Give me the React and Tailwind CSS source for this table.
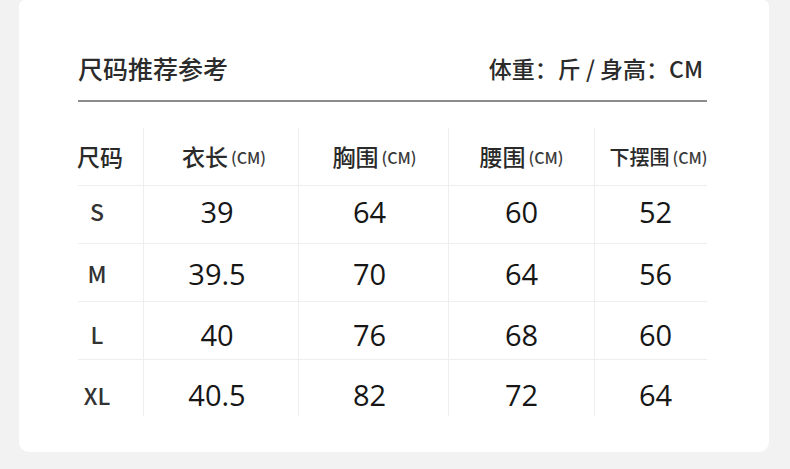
import React from "react";

const cols = "grid grid-cols-[65px_155px_150px_146px_112px]";

const headers = [
  { name: "衣长", pad: "pl-[6px]", size: "text-[23px]" },
  { name: "胸围", pad: "pl-[2px]", size: "text-[23px]" },
  { name: "腰围", pad: "", size: "text-[23px]" },
  { name: "下摆围", pad: "pl-[16px]", size: "text-[20px]" },
];

// shift: the text in the picture drifts lower row by row
const rows = [
  { size: "S", vals: ["39", "64", "60", "52"], shift: "-translate-y-[3px]" },
  { size: "M", vals: ["39.5", "70", "64", "56"], shift: "translate-y-[1px]" },
  { size: "L", vals: ["40", "76", "68", "60"], shift: "translate-y-[4px]" },
  { size: "XL", vals: ["40.5", "82", "72", "64"], shift: "translate-y-[7px]" },
];

// nudges so the numbers sit where they do in the picture
const valPad = ["pr-[8px]", "pr-[8px]", "", "pl-[10px]"];

const SizeTable = () => {
  return (
    <div className="mt-[26px]">
      {/* header row */}
      <div className={`${cols} h-[58px] border-b border-[#eeeeee]`}>
        <div className="flex items-center text-[23px] font-medium text-[#2a2a2a] -ml-[1px]">
          尺码
        </div>
        {headers.map((h) => (
          <div
            key={h.name}
            className={`flex items-center justify-center whitespace-nowrap border-l border-[#eeeeee] ${h.pad}`}
          >
            <span className={`${h.size} font-medium text-[#2a2a2a]`}>{h.name}</span>
            <span className="ml-[3px] text-[16px] font-medium text-[#3a3a3a]">
              (CM)
            </span>
          </div>
        ))}
      </div>

      {rows.map((r, i) => (
        <div
          key={r.size}
          className={`${cols} ${
            i === rows.length - 1 ? "h-[56px]" : "h-[58px] border-b border-[#eeeeee]"
          }`}
        >
          <div className="flex items-center">
            <span
              className={`w-[38px] text-center text-[23px] font-medium text-[#333333] ${r.shift}`}
            >
              {r.size}
            </span>
          </div>
          {r.vals.map((v, j) => (
            <div
              key={j}
              className={`flex items-center justify-center border-l border-[#eeeeee] ${valPad[j]}`}
            >
              <span
                className={`text-[29px] text-[#161616] ${r.shift}`}
                style={{ fontFamily: '"Open Sans", "Noto Sans", sans-serif' }}
              >
                {v}
              </span>
            </div>
          ))}
        </div>
      ))}
    </div>
  );
};

const App = () => {
  return (
    <div
      className="min-h-[469px] w-[790px] bg-[#f2f2f2] pl-[19px] pr-[21px] pb-[17px]"
      style={{ fontFamily: '"Noto Sans CJK SC", "Noto Sans", sans-serif' }}
    >
      <div className="h-[452px] bg-white rounded-b-[10px] rounded-t-[6px] pt-[50px] pl-[59px] pr-[62px]">
        {/* title bar */}
        <div className="h-[52px] pb-[14px] border-b-2 border-[#8c8c8c] flex items-center justify-between leading-none">
          <div className="text-[25px] font-medium text-[#2b2b2b]">尺码推荐参考</div>
          <div className="text-[23px] font-medium text-[#2b2b2b] pr-[4px]">
            体重：斤 / 身高：CM
          </div>
        </div>
        <SizeTable />
      </div>
    </div>
  );
};

export default App;
